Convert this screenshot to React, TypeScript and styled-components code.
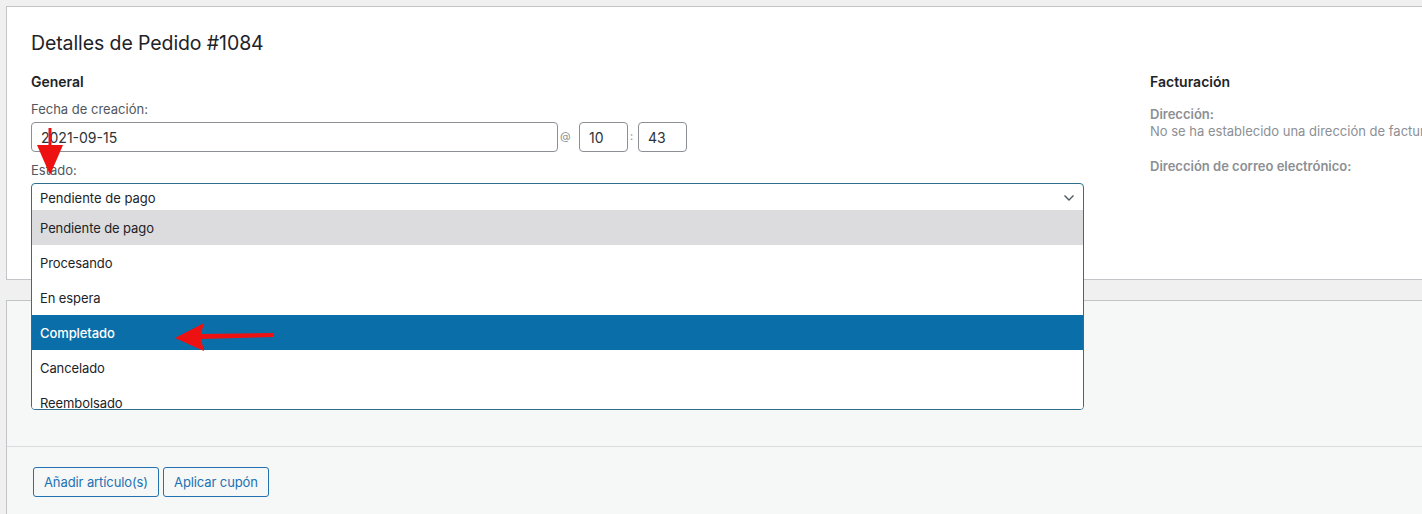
import React from 'react'
import styled, { createGlobalStyle } from 'styled-components'

const GlobalStyle = createGlobalStyle`
  html, body {
    margin: 0;
    padding: 0;
    background: #f0f0f1;
    font-family: Inter, "Noto Sans", Arial, sans-serif;
    color: #1d2327;
  }
`

const Page = styled.div`
  position: relative;
  width: 1422px;
  height: 514px;
  overflow: hidden;
  padding: 6px 0 0 6px;
  box-sizing: border-box;
`

const Panel = styled.div`
  position: relative;
  z-index: 2;
  background: #fff;
  border: 1px solid #c3c4c7;
  border-right: none;
  height: 274px;
  box-sizing: border-box;
  padding: 24px 0 0 24px;
`

const Title = styled.h2`
  margin: 0;
  font-size: 19.5px;
  font-weight: 400;
  line-height: 25px;
  letter-spacing: -0.1px;
  color: #1d2327;
`

const Columns = styled.div`
  display: flex;
  margin-top: 16px;
`

const LeftColumn = styled.div`
  width: 1053px;
  flex: none;
`

const RightColumn = styled.div`
  margin-left: 66px;
  white-space: nowrap;
`

const Heading = styled.h3`
  margin: 0;
  font-size: 14px;
  font-weight: 600;
  line-height: 20px;
  color: #1d2327;
`

const Label = styled.div<{ $gap: number }>`
  margin-top: ${(p) => p.$gap}px;
  font-size: 13px;
  line-height: 18px;
  color: #50575e;
`

const DateRow = styled.div`
  display: flex;
  align-items: center;
  margin-top: 4px;
`

const Input = styled.div<{ $width: number }>`
  width: ${(p) => p.$width}px;
  height: 30px;
  flex: none;
  box-sizing: border-box;
  border: 1px solid #8c8f94;
  border-radius: 4px;
  padding: 0 9px;
  display: flex;
  align-items: center;
  font-size: 14px;
  color: #2c3338;
  background: #fff;
`

const Sep = styled.span<{ $w: number }>`
  width: ${(p) => p.$w}px;
  flex: none;
  box-sizing: border-box;
  font-size: 11px;
  color: #8c8f94;
  padding-left: 2px;
  align-self: flex-start;
  margin-top: 7px;
`

const SelectWrap = styled.div`
  position: relative;
  margin-top: 4px;
  height: 26px;
`

const SelectList = styled.div`
  position: absolute;
  top: 0;
  left: 0;
  right: 0;
  z-index: 5;
  height: 227px;
  box-sizing: border-box;
  border: 1px solid #2f6f8c;
  border-radius: 4px;
  background: #fff;
  overflow: hidden;
`

const SelectValue = styled.div`
  height: 26px;
  padding-top: 2px;
  box-sizing: border-box;
  display: flex;
  align-items: center;
  justify-content: space-between;
  padding-left: 8px;
  padding-right: 8px;
  font-size: 13px;
  color: #1d2327;
`

const Option = styled.div<{ $state?: 'hover' | 'selected' }>`
  height: 35px;
  display: flex;
  align-items: center;
  padding-left: 8px;
  font-size: 13px;
  letter-spacing: -0.1px;
  background: ${(p) =>
    p.$state === 'hover' ? '#dcdcde' : p.$state === 'selected' ? '#0a6fa8' : '#fff'};
  color: ${(p) => (p.$state === 'selected' ? '#fff' : '#1d2327')};
  font-weight: ${(p) => (p.$state === 'selected' ? 500 : 400)};
`

const InfoLabel = styled.div<{ $gap: number }>`
  margin-top: ${(p) => p.$gap}px;
  font-size: 13px;
  font-weight: 600;
  line-height: 17px;
  color: #8c8f94;
`

const InfoText = styled.div`
  font-size: 13px;
  line-height: 17px;
  color: #8c8f94;
`

const ItemsPanel = styled.div`
  position: relative;
  z-index: 1;
  margin-top: 20px;
  background: #f6f7f7;
  border: 1px solid #c3c4c7;
  border-right: none;
  height: 300px;
  box-sizing: border-box;
`

const ItemsBody = styled.div`
  height: 145px;
  border-bottom: 1px solid #dcdcde;
`

const Actions = styled.div`
  display: flex;
  gap: 4px;
  padding: 20px 0 0 26px;
`

const Button = styled.button`
  height: 30px;
  padding: 0 10px;
  border: 1px solid #2271b1;
  border-radius: 3px;
  background: #f6f7f7;
  color: #2271b1;
  font-family: inherit;
  font-size: 13px;
  letter-spacing: -0.1px;
`

const Annotations = styled.svg`
  position: absolute;
  top: 0;
  left: 0;
  z-index: 10;
  pointer-events: none;
`

const statuses = ['Pendiente de pago', 'Procesando', 'En espera', 'Completado', 'Cancelado', 'Reembolsado']

export default function App() {
  return (
    <>
      <GlobalStyle />
      <Page>
        <Panel>
          <Title>Detalles de Pedido #1084</Title>
          <Columns>
            <LeftColumn>
              <Heading>General</Heading>
              <Label $gap={8}>Fecha de creación:</Label>
              <DateRow>
                <Input $width={527}>2021-09-15</Input>
                <Sep $w={21}>@</Sep>
                <Input $width={49}>10</Input>
                <Sep $w={10}>:</Sep>
                <Input $width={49}>43</Input>
              </DateRow>
              <Label $gap={9}>Estado:</Label>
              <SelectWrap>
                <SelectList>
                  <SelectValue>
                    Pendiente de pago
                    <svg width="12" height="8" viewBox="0 0 12 8">
                      <path d="M1.5 1.5 L6 6 L10.5 1.5" fill="none" stroke="#50575e" strokeWidth="1.4" />
                    </svg>
                  </SelectValue>
                  {statuses.map((s, i) => (
                    <Option key={s} $state={i === 0 ? 'hover' : i === 3 ? 'selected' : undefined}>
                      {s}
                    </Option>
                  ))}
                </SelectList>
              </SelectWrap>
            </LeftColumn>
            <RightColumn>
              <Heading>Facturación</Heading>
              <InfoLabel $gap={14}>Dirección:</InfoLabel>
              <InfoText>No se ha establecido una dirección de facturación.</InfoText>
              <InfoLabel $gap={18}>Dirección de correo electrónico:</InfoLabel>
            </RightColumn>
          </Columns>
        </Panel>
        <ItemsPanel>
          <ItemsBody />
          <Actions>
            <Button>Añadir artículo(s)</Button>
            <Button>Aplicar cupón</Button>
          </Actions>
        </ItemsPanel>
        <Annotations width="1422" height="514">
          <rect x="48.5" y="128" width="3" height="19" fill="#ee1111" />
          <polygon points="37,145 63,145 50,175" fill="#ee1111" />
          <polygon points="175,338 204,323 201,334 273,333 273,337 201,339 204,351" fill="#ee1111" />
        </Annotations>
      </Page>
    </>
  )
}
